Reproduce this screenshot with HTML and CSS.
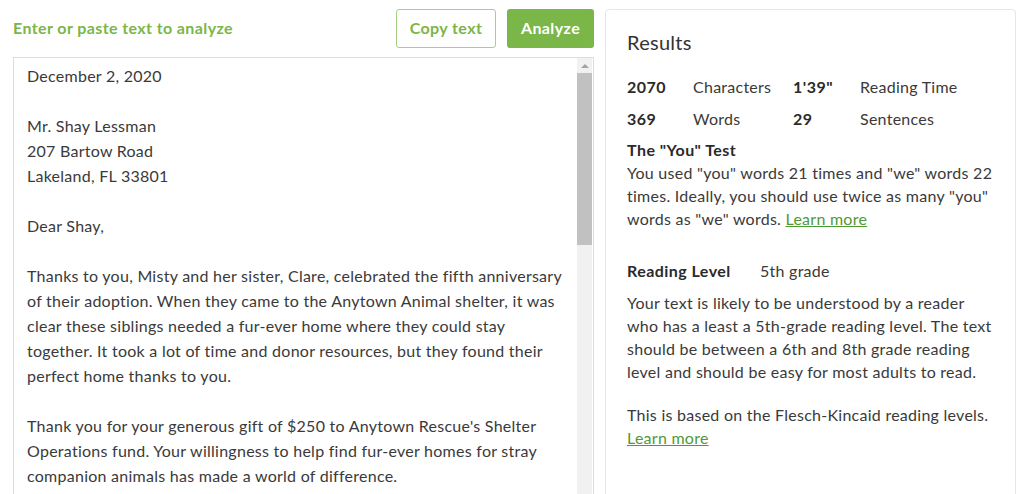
FILE: index.html
```html
<!DOCTYPE html>
<html lang="en">
<head>
    <meta charset="UTF-8">
    <meta name="viewport" content="width=device-width, initial-scale=1.0">
    <title>Text Analyzer</title>
    <link rel="stylesheet" href="styles.css">
</head>
<body>
    <div class="page">
        <div class="editor-col">
            <div class="toolbar">
                <span class="toolbar-label">Enter or paste text to analyze</span>
                <button class="btn btn-outline" id="copyBtn">Copy text</button>
                <button class="btn btn-fill" id="analyzeBtn">Analyze</button>
            </div>

            <div class="editor">
                <div class="editor-text" id="editorText">
                    <p>December 2, 2020</p>
                    <p>Mr. Shay Lessman<br>207 Bartow Road<br>Lakeland, FL 33801</p>
                    <p>Dear Shay,</p>
                    <p>Thanks to you, Misty and her sister, Clare, celebrated the fifth anniversary of their adoption. When they came to the Anytown Animal shelter, it was clear these siblings needed a fur-ever home where they could stay together. It took a lot of time and donor resources, but they found their perfect home thanks to you.</p>
                    <p>Thank you for your generous gift of $250 to Anytown Rescue's Shelter Operations fund. Your willingness to help find fur-ever homes for stray companion animals has made a world of difference.</p>
                </div>
                <div class="scrollbar">
                    <span class="scroll-arrow"></span>
                    <span class="scroll-thumb"></span>
                </div>
            </div>
        </div>

        <div class="results">
            <h2>Results</h2>
            <div class="stats">
                <b>2070</b><span>Characters</span><b>1'39"</b><span>Reading Time</span>
                <b>369</b><span>Words</span><b>29</b><span>Sentences</span>
            </div>

            <div class="section">
                <h3>The "You" Test</h3>
                <p>You used "you" words 21 times and "we" words 22 times. Ideally, you should use twice as many "you" words as "we" words. <a href="#">Learn more</a></p>
            </div>

            <div class="section">
                <div class="level-row"><h3>Reading Level</h3><span>5th grade</span></div>
                <p>Your text is likely to be understood by a reader who has a least a 5th-grade reading level. The text should be between a 6th and 8th grade reading level and should be easy for most adults to read.</p>
                <p>This is based on the Flesch-Kincaid reading levels. <a href="#">Learn more</a></p>
            </div>
        </div>
    </div>

    <script>
        document.getElementById('copyBtn').addEventListener('click', () => {
            const text = document.getElementById('editorText').innerText;
            if (navigator.clipboard) navigator.clipboard.writeText(text);
        });
    </script>
</body>
</html>
```

FILE: styles.css
```css
* {
    margin: 0;
    padding: 0;
    box-sizing: border-box;
}
body {
    font-family: Lato, 'Liberation Sans', sans-serif;
    color: #3a3a3a;
    background-color: #fff;
    letter-spacing: 0.26px;
    overflow: hidden;
    height: 494px;
}
.page {
    display: flex;
    gap: 11px;
    padding: 9px 8px 0 13px;
}
.editor-col {
    width: 581px;
    flex-shrink: 0;
}
.toolbar {
    display: flex;
    align-items: center;
    gap: 11px;
    height: 39px;
    margin-bottom: 9px;
}
.toolbar-label {
    flex: 1;
    color: #7ab648;
    font-size: 16px;
    font-weight: bold;
    letter-spacing: 0.4px;
    padding-bottom: 2px;
}
.btn {
    height: 39px;
    font-family: inherit;
    font-size: 16px;
    font-weight: bold;
    letter-spacing: 0.4px;
    padding-bottom: 2px;
    border-radius: 3px;
    cursor: pointer;
}
.btn-outline {
    width: 100px;
    background-color: #fff;
    color: #7ab648;
    border: 1px solid #a5d184;
}
.btn-fill {
    width: 87px;
    background-color: #7ab648;
    color: #fff;
    border: none;
}
.editor {
    display: flex;
    height: 460px;
    border: 1px solid #dcdcdc;
}
.editor-text {
    flex: 1;
    padding: 5px 13px;
    font-size: 16px;
    line-height: 25px;
    overflow: hidden;
}
.editor-text p {
    margin-bottom: 25px;
}
.scrollbar {
    width: 15px;
    margin-right: 1px;
    background-color: #f1f1f1;
    display: flex;
    flex-direction: column;
    align-items: center;
}
.scroll-arrow {
    margin: 6px 0 5px;
    border-left: 4px solid transparent;
    border-right: 4px solid transparent;
    border-bottom: 4px solid #a3a3a3;
}
.scroll-thumb {
    width: 15px;
    height: 172px;
    background-color: #c1c1c1;
}
.results {
    flex: 1;
    height: 490px;
    border: 1px solid #e6e6e6;
    border-radius: 4px;
    padding: 18px 20px 20px 21px;
    font-size: 16px;
    line-height: 23px;
}
.results h2 {
    font-size: 20px;
    font-weight: normal;
    color: #333;
    line-height: 28px;
    margin-bottom: 19px;
}
.stats {
    display: grid;
    grid-template-columns: 66px 100px 67px auto;
    row-gap: 9px;
    margin-bottom: 8px;
}
.stats b {
    color: #2a2a2a;
    letter-spacing: 0.5px;
}
.results h3 {
    font-size: 16px;
    font-weight: bold;
    color: #2a2a2a;
    letter-spacing: 0.45px;
}
.section {
    margin-bottom: 29px;
}
.section p + p {
    margin-top: 20px;
}
.level-row {
    display: flex;
    margin-bottom: 9px;
}
.level-row h3 {
    width: 133px;
}
.results a {
    color: #4f9a34;
    text-decoration: underline;
}
```
